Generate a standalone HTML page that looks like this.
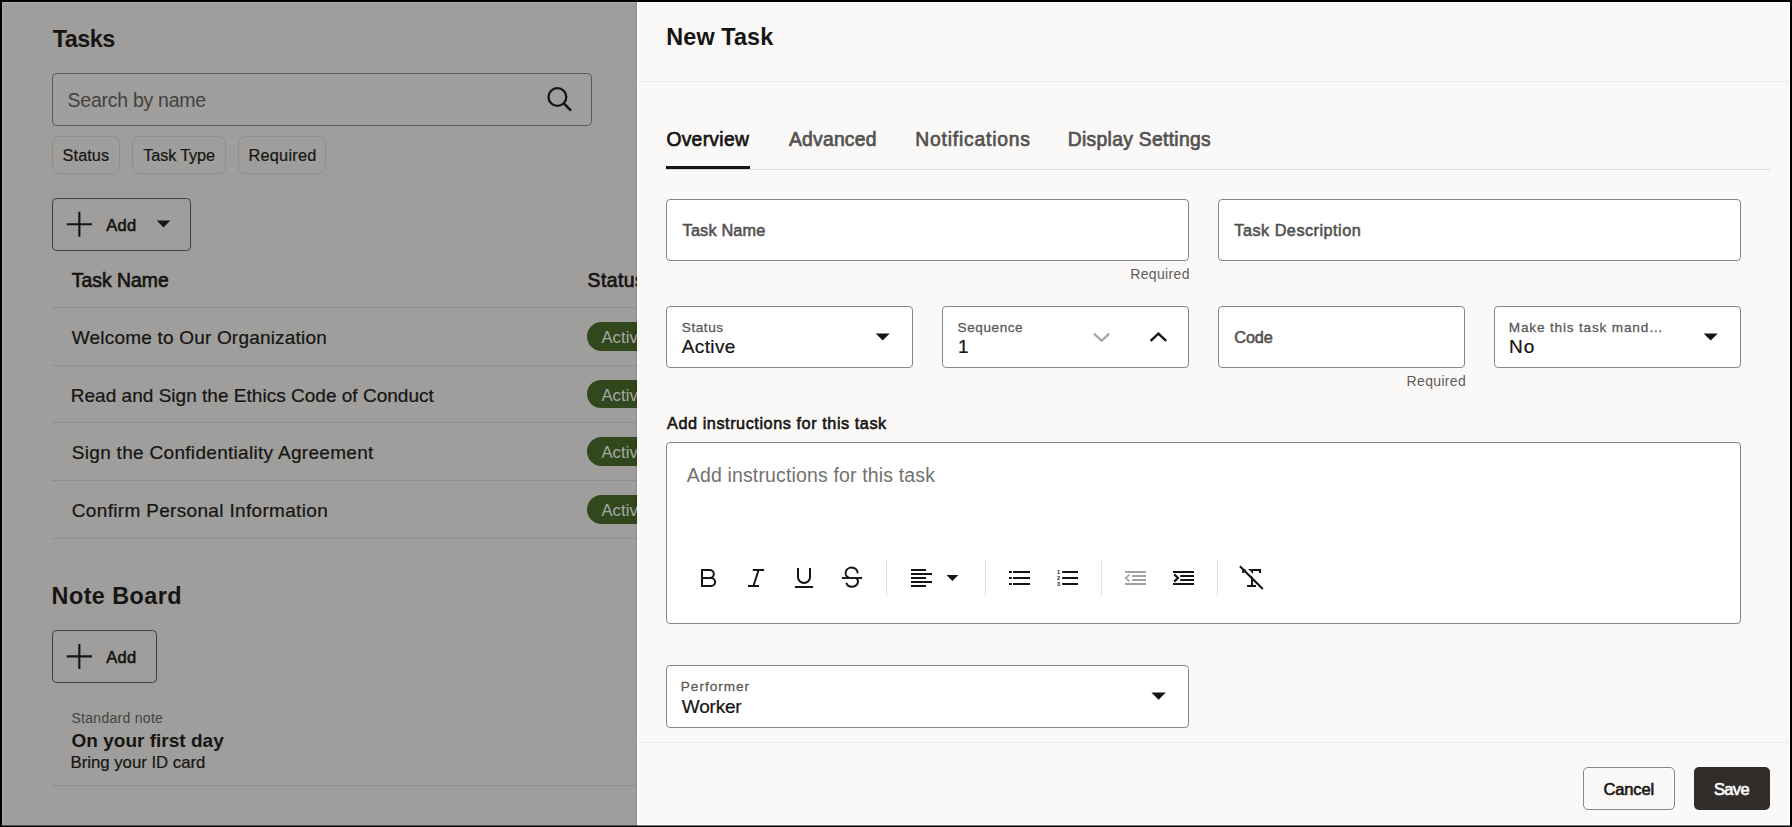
<!DOCTYPE html>
<html lang="en">
<head>
<meta charset="utf-8">
<title>New Task</title>
<style>
html,body{margin:0;padding:0;}
body{width:1792px;height:827px;overflow:hidden;background:#000;font-family:"Liberation Sans",sans-serif;position:relative;}
.abs,.t,.box,.ln{position:absolute;}
.t{white-space:pre;}
#left{position:absolute;left:2px;top:2px;width:635px;height:823px;background:#9f9e9c;overflow:hidden;}
#left .in{position:absolute;left:-2px;top:-2px;width:1792px;height:827px;}
#drawer{position:absolute;left:637px;top:2px;width:1153px;height:823px;background:#fbf9f8;overflow:hidden;}
#drawer .in{position:absolute;left:-637px;top:-2px;width:1792px;height:827px;}
.box{box-sizing:border-box;border:1px solid #888685;border-radius:4px;background:#fff;}
.lbox{box-sizing:border-box;border:1px solid #5a5957;border-radius:4.5px;position:absolute;}
.chip{box-sizing:border-box;border:1px solid #918f8d;border-radius:7px;position:absolute;top:136px;height:38px;}
.ln{height:1px;background:#8f8e8c;left:52px;width:600px;}
.badge{position:absolute;left:587px;width:80px;height:29px;border-radius:15px;background:#30481b;}
.sep{position:absolute;width:1px;top:560px;height:35px;background:#e1dfdd;}
svg{position:absolute;overflow:visible;}
</style>
</head>
<body>
<div id="left"><div class="in">
  <!-- highlight inner edge -->
  <div class="abs" style="left:2px;top:2px;width:635px;height:1px;background:#abaaa8"></div>
  <div class="abs" style="left:2px;top:2px;width:1px;height:823px;background:#abaaa8"></div>
  <!-- search -->
  <div class="lbox" style="left:52px;top:73px;width:540px;height:53px;"></div>
  <svg style="left:540px;top:80px" width="40" height="40" viewBox="540 80 40 40"><circle cx="557.4" cy="97" r="8.9" fill="none" stroke="#161513" stroke-width="2.3"/><line x1="563.8" y1="103.4" x2="571" y2="110.6" stroke="#161513" stroke-width="2.5"/></svg>
  <!-- chips -->
  <div class="chip" style="left:52px;width:68px;"></div>
  <div class="chip" style="left:132px;width:94px;"></div>
  <div class="chip" style="left:238px;width:88px;"></div>
  <!-- add button -->
  <div class="lbox" style="left:52px;top:198px;width:139px;height:53px;border-color:#403f3d"></div>
  <svg style="left:60px;top:205px" width="120" height="40" viewBox="60 205 120 40"><path d="M66.8 224.3H91.9M79.35 211.8V236.8" stroke="#161513" stroke-width="2.1" fill="none"/><path d="M156.7 220.6H170.3L163.5 227.6Z" fill="#161513"/></svg>
  <!-- table -->
  <div class="ln" style="top:307px"></div>
  <div class="ln" style="top:365px"></div>
  <div class="ln" style="top:422px"></div>
  <div class="ln" style="top:480px"></div>
  <div class="ln" style="top:538px"></div>
  <div class="badge" style="top:322px"></div>
  <div class="badge" style="top:380px;height:28px"></div>
  <div class="badge" style="top:437px"></div>
  <div class="badge" style="top:495px"></div>
  <!-- note board -->
  <div class="lbox" style="left:52px;top:630px;width:105px;height:53px;border-color:#403f3d"></div>
  <svg style="left:60px;top:640px" width="40" height="40" viewBox="60 640 40 40"><path d="M66.8 656.4H91.9M79.35 643.9V668.9" stroke="#161513" stroke-width="2.1" fill="none"/></svg>
  <div class="ln" style="top:785px"></div>
<span class="t" style="left:52.80px;top:28.00px;font-size:23.4px;line-height:23.4px;letter-spacing:-0.544px;color:#161513;font-weight:700;">Tasks</span>
<span class="t" style="left:67.60px;top:91.00px;font-size:19.5px;line-height:19.5px;letter-spacing:-0.273px;color:#434240;">Search by name</span>
<span class="t" style="left:62.60px;top:147.00px;font-size:16.3px;line-height:16.3px;letter-spacing:0.077px;color:#161513;-webkit-text-stroke:0.2px #161513;">Status</span>
<span class="t" style="left:143.30px;top:147.00px;font-size:16.3px;line-height:16.3px;letter-spacing:-0.155px;color:#161513;-webkit-text-stroke:0.2px #161513;">Task Type</span>
<span class="t" style="left:248.40px;top:147.00px;font-size:16.3px;line-height:16.3px;letter-spacing:0.269px;color:#161513;-webkit-text-stroke:0.2px #161513;">Required</span>
<span class="t" style="left:106.20px;top:217.00px;font-size:16.5px;line-height:16.5px;letter-spacing:0.314px;color:#161513;-webkit-text-stroke:0.59px #161513;">Add</span>
<span class="t" style="left:71.80px;top:271.00px;font-size:19.3px;line-height:19.3px;letter-spacing:0.050px;color:#161513;-webkit-text-stroke:0.69px #161513;">Task Name</span>
<span class="t" style="left:587.60px;top:271.00px;font-size:19.3px;line-height:19.3px;letter-spacing:0.458px;color:#161513;-webkit-text-stroke:0.69px #161513;">Status</span>
<span class="t" style="left:71.80px;top:328.00px;font-size:19px;line-height:19px;letter-spacing:0.193px;color:#161513;-webkit-text-stroke:0.23px #161513;">Welcome to Our Organization</span>
<span class="t" style="left:70.80px;top:386.00px;font-size:19px;line-height:19px;letter-spacing:0.019px;color:#161513;-webkit-text-stroke:0.23px #161513;">Read and Sign the Ethics Code of Conduct</span>
<span class="t" style="left:71.80px;top:443.00px;font-size:19px;line-height:19px;letter-spacing:0.303px;color:#161513;-webkit-text-stroke:0.23px #161513;">Sign the Confidentiality Agreement</span>
<span class="t" style="left:71.80px;top:501.00px;font-size:19px;line-height:19px;letter-spacing:0.327px;color:#161513;-webkit-text-stroke:0.23px #161513;">Confirm Personal Information</span>
<span class="t" style="left:601.40px;top:330.00px;font-size:16.7px;line-height:16.7px;letter-spacing:0.068px;color:#a9a8a6;">Active</span>
<span class="t" style="left:601.40px;top:388.00px;font-size:16.7px;line-height:16.7px;letter-spacing:0.068px;color:#a9a8a6;">Active</span>
<span class="t" style="left:601.40px;top:445.00px;font-size:16.7px;line-height:16.7px;letter-spacing:0.068px;color:#a9a8a6;">Active</span>
<span class="t" style="left:601.40px;top:503.00px;font-size:16.7px;line-height:16.7px;letter-spacing:0.068px;color:#a9a8a6;">Active</span>
<span class="t" style="left:51.60px;top:585.00px;font-size:23.4px;line-height:23.4px;letter-spacing:0.437px;color:#161513;font-weight:700;">Note Board</span>
<span class="t" style="left:106.20px;top:649.00px;font-size:16.5px;line-height:16.5px;letter-spacing:0.314px;color:#161513;-webkit-text-stroke:0.59px #161513;">Add</span>
<span class="t" style="left:71.50px;top:711.00px;font-size:14px;line-height:14px;letter-spacing:0.286px;color:#43423f;">Standard note</span>
<span class="t" style="left:71.50px;top:731.00px;font-size:19px;line-height:19px;letter-spacing:0.015px;color:#161513;font-weight:700;">On your first day</span>
<span class="t" style="left:70.50px;top:755.00px;font-size:16.8px;line-height:16.8px;letter-spacing:-0.018px;color:#161513;-webkit-text-stroke:0.2px #161513;">Bring your ID card</span>
  <div class="abs" style="left:635px;top:2px;width:1px;height:823px;background:rgba(0,0,0,0.03)"></div>
  <div class="abs" style="left:636px;top:2px;width:1px;height:823px;background:rgba(0,0,0,0.075)"></div>
</div></div>

<div id="drawer"><div class="in">
  <div class="abs" style="left:637px;top:81px;width:1153px;height:1px;background:#efedeb"></div>
  <div class="abs" style="left:637px;top:742px;width:1153px;height:1px;background:#efedeb"></div>
  <div class="abs" style="left:637px;top:2px;width:1px;height:823px;background:#fff"></div>
  <!-- window inner highlight -->
  <div class="abs" style="left:637px;top:2px;width:1153px;height:1px;background:#fff"></div>
  <div class="abs" style="left:1789px;top:2px;width:1px;height:823px;background:#fff"></div>
  <div class="abs" style="left:637px;top:824px;width:1153px;height:1px;background:#fff"></div>
  <!-- tabs -->
  <div class="abs" style="left:666px;top:169px;width:1104px;height:1px;background:#dcdad8"></div>
  <div class="abs" style="left:666px;top:166px;width:84px;height:3px;background:#161513"></div>
  <!-- row 1 -->
  <div class="box" style="left:666px;top:199px;width:523px;height:62px"></div>
  <div class="box" style="left:1218px;top:199px;width:523px;height:62px"></div>
  <!-- row 2 -->
  <div class="box" style="left:666px;top:306px;width:247px;height:62px"></div>
  <div class="box" style="left:942px;top:306px;width:247px;height:62px"></div>
  <div class="box" style="left:1218px;top:306px;width:247px;height:62px"></div>
  <div class="box" style="left:1494px;top:306px;width:247px;height:62px"></div>
  <svg style="left:860px;top:320px" width="40" height="30" viewBox="860 320 40 30"><path d="M875.7 333.6H889.7L882.7 340.6Z" fill="#161513"/></svg>
  <svg style="left:1690px;top:320px" width="40" height="30" viewBox="1690 320 40 30"><path d="M1703.6 333.6H1717.8L1710.7 340.6Z" fill="#161513"/></svg>
  <svg style="left:1085px;top:320px" width="100" height="30" viewBox="1085 320 100 30"><path d="M1094 333.6L1101.6 340.7L1109.2 333.6" fill="none" stroke="#a7a4a1" stroke-width="2.2"/><path d="M1150.6 340.9L1158.4 333.6L1166.2 340.9" fill="none" stroke="#161513" stroke-width="2.4"/></svg>
  <!-- rich text -->
  <div class="box" style="left:666px;top:442px;width:1075px;height:182px"></div>
  <div class="sep" style="left:886px"></div>
  <div class="sep" style="left:985px"></div>
  <div class="sep" style="left:1101px"></div>
  <div class="sep" style="left:1217px"></div>
  <svg style="left:690px;top:555px" width="600" height="45" viewBox="690 555 600 45">
    <g fill="none" stroke="#161513" stroke-width="2">
      <!-- bold -->
      <path d="M702 570H709.8a4 4 0 0 1 0 8H702M709.8 578H711.1a4 4 0 0 1 0 8H702V569"/>
      <!-- italic -->
      <path d="M752.8 570H764.1M748 586H759M758.6 570L753.4 586"/>
      <!-- underline -->
      <path d="M798 568V577a6 6 0 0 0 12 0V568M794.9 587H813.1"/>
      <!-- strikethrough -->
      <path d="M842 578H862.1" stroke-width="1.9"/>
      <path d="M857.6 573.4A6 5.4 0 1 0 849.2 577.9"/>
      <path d="M846.3 582.8A6 5.6 0 0 0 858 581.4Q858.2 579.8 856.5 578.4"/>
      <!-- align -->
      <path d="M911 570H926M911 574H932M911 578H926M911 582H932M911 586H926"/>
      <!-- bullets -->
      <path d="M1009 572H1011.8M1013 572H1030M1009 578H1011.8M1013 578H1030M1009 584H1011.8M1013 584H1030"/>
      <!-- numbered -->
      <path d="M1062.2 572H1078M1062.2 578H1078M1062.2 584H1078"/>
      <!-- indent -->
      <path d="M1173 572H1194M1180.2 576H1194M1180.2 580H1194M1173 584H1194"/>
      <path d="M1174.2 574.4L1178 578L1174.2 581.6" stroke-width="2.2"/>
      <!-- clear format -->
      <path d="M1243.2 573V570H1260V573M1252 570V586M1247.1 586H1256"/>
      <path d="M1242.4 565.2L1264.6 587.4" stroke="#fff" stroke-width="2.6"/>
      <path d="M1239.9 566.3L1262.8 589.1" stroke-width="2.1"/>
    </g>
    <!-- outdent (disabled) -->
    <g fill="none" stroke="#a3a09e" stroke-width="2">
      <path d="M1125 572H1146M1132 576H1146M1132 580H1146M1125 584H1146"/>
      <path d="M1129.4 574.6L1125.8 578L1129.4 581.4" stroke-width="1.6"/>
    </g>
    <path d="M946.5 575H958.3L952.4 581Z" fill="#161513"/>
    <g font-family="Liberation Sans, sans-serif" font-size="5.6" font-weight="700" fill="#161513">
      <text x="1057" y="573.9">1</text><text x="1057" y="579.9">2</text><text x="1057" y="585.9">3</text>
    </g>
</svg>

  <!-- performer -->
  <div class="box" style="left:666px;top:665px;width:523px;height:63px"></div>
  <svg style="left:1140px;top:680px" width="40" height="30" viewBox="1140 680 40 30"><path d="M1151.4 692.6H1165.8L1158.6 699.7Z" fill="#161513"/></svg>
  <!-- footer -->
  <div class="abs" style="left:1583px;top:767px;width:92px;height:43px;box-sizing:border-box;border:1px solid #8a8886;border-radius:5px;"></div>
  <div class="abs" style="left:1694px;top:767px;width:76px;height:43px;border-radius:5px;background:#312d2a"></div>
<span class="t" style="left:666.30px;top:26.00px;font-size:23.4px;line-height:23.4px;letter-spacing:0.105px;color:#161513;font-weight:700;">New Task</span>
<span class="t" style="left:666.40px;top:130.00px;font-size:19.3px;line-height:19.3px;letter-spacing:0.297px;color:#161513;-webkit-text-stroke:0.69px #161513;">Overview</span>
<span class="t" style="left:789.00px;top:130.00px;font-size:19.3px;line-height:19.3px;letter-spacing:0.239px;color:#545250;-webkit-text-stroke:0.69px #545250;">Advanced</span>
<span class="t" style="left:915.20px;top:130.00px;font-size:19.3px;line-height:19.3px;letter-spacing:0.811px;color:#545250;-webkit-text-stroke:0.69px #545250;">Notifications</span>
<span class="t" style="left:1067.80px;top:130.00px;font-size:19.3px;line-height:19.3px;letter-spacing:0.307px;color:#545250;-webkit-text-stroke:0.69px #545250;">Display Settings</span>
<span class="t" style="left:682.60px;top:222.00px;font-size:16.25px;line-height:16.25px;letter-spacing:0.173px;color:#545250;-webkit-text-stroke:0.58px #545250;">Task Name</span>
<span class="t" style="left:1234.30px;top:222.00px;font-size:16.25px;line-height:16.25px;letter-spacing:0.483px;color:#545250;-webkit-text-stroke:0.58px #545250;">Task Description</span>
<span class="t" style="left:1130.30px;top:267.00px;font-size:14px;line-height:14px;letter-spacing:0.339px;color:#5f5d5b;">Required</span>
<span class="t" style="left:681.80px;top:321.00px;font-size:13.6px;line-height:13.6px;letter-spacing:0.558px;color:#5b5957;-webkit-text-stroke:0.27px #5b5957;">Status</span>
<span class="t" style="left:681.80px;top:337.00px;font-size:19px;line-height:19px;letter-spacing:0.359px;color:#161513;-webkit-text-stroke:0.23px #161513;">Active</span>
<span class="t" style="left:957.60px;top:321.00px;font-size:13.6px;line-height:13.6px;letter-spacing:0.552px;color:#5b5957;-webkit-text-stroke:0.27px #5b5957;">Sequence</span>
<span class="t" style="left:958.00px;top:337.00px;font-size:19px;line-height:19px;letter-spacing:0.000px;color:#161513;-webkit-text-stroke:0.23px #161513;">1</span>
<span class="t" style="left:1234.30px;top:329.00px;font-size:16.25px;line-height:16.25px;letter-spacing:-0.130px;color:#545250;-webkit-text-stroke:0.58px #545250;">Code</span>
<span class="t" style="left:1406.60px;top:374.00px;font-size:14px;line-height:14px;letter-spacing:0.339px;color:#5f5d5b;">Required</span>
<span class="t" style="left:1508.80px;top:321.00px;font-size:13.6px;line-height:13.6px;letter-spacing:0.819px;color:#5b5957;-webkit-text-stroke:0.27px #5b5957;">Make this task mand…</span>
<span class="t" style="left:1509.10px;top:337.00px;font-size:19px;line-height:19px;letter-spacing:1.049px;color:#161513;-webkit-text-stroke:0.23px #161513;">No</span>
<span class="t" style="left:667.00px;top:415.00px;font-size:16.25px;line-height:16.25px;letter-spacing:0.553px;color:#161513;-webkit-text-stroke:0.58px #161513;">Add instructions for this task</span>
<span class="t" style="left:686.80px;top:466.00px;font-size:19.5px;line-height:19.5px;letter-spacing:0.148px;color:#73716f;">Add instructions for this task</span>
<span class="t" style="left:680.80px;top:680.00px;font-size:13.6px;line-height:13.6px;letter-spacing:0.979px;color:#5b5957;-webkit-text-stroke:0.27px #5b5957;">Performer</span>
<span class="t" style="left:681.80px;top:697.00px;font-size:19px;line-height:19px;letter-spacing:-0.196px;color:#161513;-webkit-text-stroke:0.23px #161513;">Worker</span>
<span class="t" style="left:1603.50px;top:781.00px;font-size:16.5px;line-height:16.5px;letter-spacing:-0.157px;color:#161513;-webkit-text-stroke:0.59px #161513;">Cancel</span>
<span class="t" style="left:1713.90px;top:781.00px;font-size:16.5px;line-height:16.5px;letter-spacing:-0.607px;color:#ffffff;-webkit-text-stroke:0.59px #ffffff;">Save</span>
</div></div>
<div class="abs" style="left:2px;top:825px;width:635px;height:1px;background:#4f4f4e"></div>
<div class="abs" style="left:637px;top:825px;width:1153px;height:1px;background:#7d7c7c"></div>
</body>
</html>
